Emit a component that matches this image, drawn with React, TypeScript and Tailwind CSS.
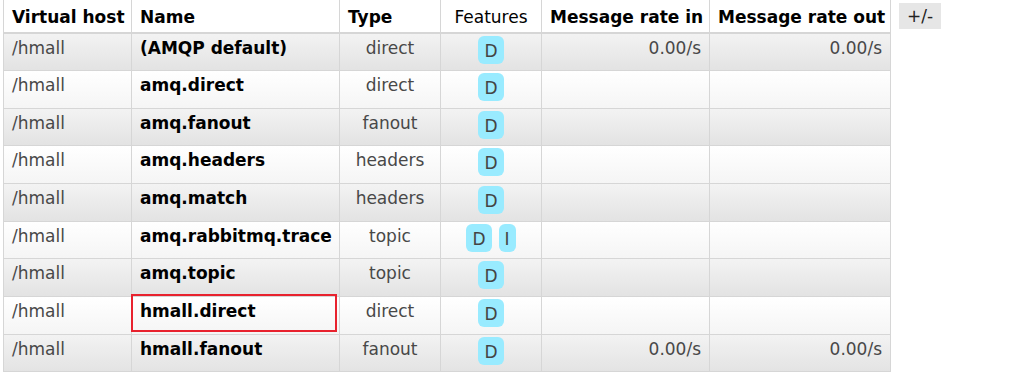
import React from "react";

type Row = {
  vhost: string;
  name: string;
  type: string;
  features: string[];
  rateIn: string;
  rateOut: string;
  marked?: boolean;
};

const rows: Row[] = [
  { vhost: "/hmall", name: "(AMQP default)", type: "direct", features: ["D"], rateIn: "0.00/s", rateOut: "0.00/s" },
  { vhost: "/hmall", name: "amq.direct", type: "direct", features: ["D"], rateIn: "", rateOut: "" },
  { vhost: "/hmall", name: "amq.fanout", type: "fanout", features: ["D"], rateIn: "", rateOut: "" },
  { vhost: "/hmall", name: "amq.headers", type: "headers", features: ["D"], rateIn: "", rateOut: "" },
  { vhost: "/hmall", name: "amq.match", type: "headers", features: ["D"], rateIn: "", rateOut: "" },
  { vhost: "/hmall", name: "amq.rabbitmq.trace", type: "topic", features: ["D", "I"], rateIn: "", rateOut: "" },
  { vhost: "/hmall", name: "amq.topic", type: "topic", features: ["D"], rateIn: "", rateOut: "" },
  { vhost: "/hmall", name: "hmall.direct", type: "direct", features: ["D"], rateIn: "", rateOut: "", marked: true },
  { vhost: "/hmall", name: "hmall.fanout", type: "fanout", features: ["D"], rateIn: "0.00/s", rateOut: "0.00/s" },
];

const cell = "border-l border-[#d6d6d6] first:border-l-0 px-[8px] align-top pt-[2px]";
const head = "border-l border-[#d6d6d6] first:border-l-0 px-[8px] pt-[4px] whitespace-nowrap";

function Badge({ label }: { label: string }) {
  return (
    <span className="block rounded-[6px] bg-[#99ebff] px-[6px] h-[28px] leading-[30px] text-[#444]">
      {label}
    </span>
  );
}

export default function App() {
  return (
    <div
      className="bg-white w-[1024px] h-[382px] flex items-start gap-[8px] pl-[3px] text-[17px]"
      style={{ fontFamily: '"DejaVu Sans", Verdana, sans-serif' }}
    >
      <table className="border-collapse table-fixed w-[887px] border-l border-r border-b border-[#d6d6d6]">
        <colgroup>
          <col className="w-[128px]" />
          <col className="w-[208px]" />
          <col className="w-[101px]" />
          <col className="w-[101px]" />
          <col className="w-[168px]" />
          <col className="w-[181px]" />
        </colgroup>
        <thead>
          <tr className="h-[33px] border-b-2 border-[#d6d6d6] text-black">
            <th className={head + " text-left font-bold"}>Virtual host</th>
            <th className={head + " text-left font-bold"}>Name</th>
            <th className={head + " text-left font-bold"}>Type</th>
            <th className={head + " text-center font-normal"}>Features</th>
            <th className={head + " text-left font-bold"}>Message rate in</th>
            <th className={head + " text-left font-bold"}>Message rate out</th>
          </tr>
        </thead>
        <tbody>
          {rows.map((r, i) => (
            <tr
              key={r.name}
              className={
                "h-[37.67px] border-b border-[#d6d6d6] last:border-b-0 bg-gradient-to-b " +
                (i % 2 === 0 ? "from-[#f3f3f3] to-[#e3e3e3]" : "from-[#ffffff] to-[#f5f5f5]")
              }
            >
              <td className={cell + " text-[#484848]"}>{r.vhost}</td>
              <td className={cell + " font-bold text-black whitespace-nowrap relative"}>
                {r.name}
                {r.marked && (
                  <span className="absolute left-[-1px] top-[-3px] w-[206px] h-[38px] border-2 border-[#e8222e] pointer-events-none" />
                )}
              </td>
              <td className={cell + " text-center text-[#484848]"}>{r.type}</td>
              <td className="border-l border-[#d6d6d6] px-[8px] align-top pt-[2px]">
                <div className="flex justify-center gap-[7px]">
                  {r.features.map((f) => (
                    <Badge key={f} label={f} />
                  ))}
                </div>
              </td>
              <td className={cell + " text-right text-[#484848]"}>{r.rateIn}</td>
              <td className={cell + " text-right text-[#484848]"}>{r.rateOut}</td>
            </tr>
          ))}
        </tbody>
      </table>
      <span className="mt-[3px] bg-[#e6e6e6] px-[8px] h-[26px] leading-[26px] text-[#222]">+/-</span>
    </div>
  );
}
